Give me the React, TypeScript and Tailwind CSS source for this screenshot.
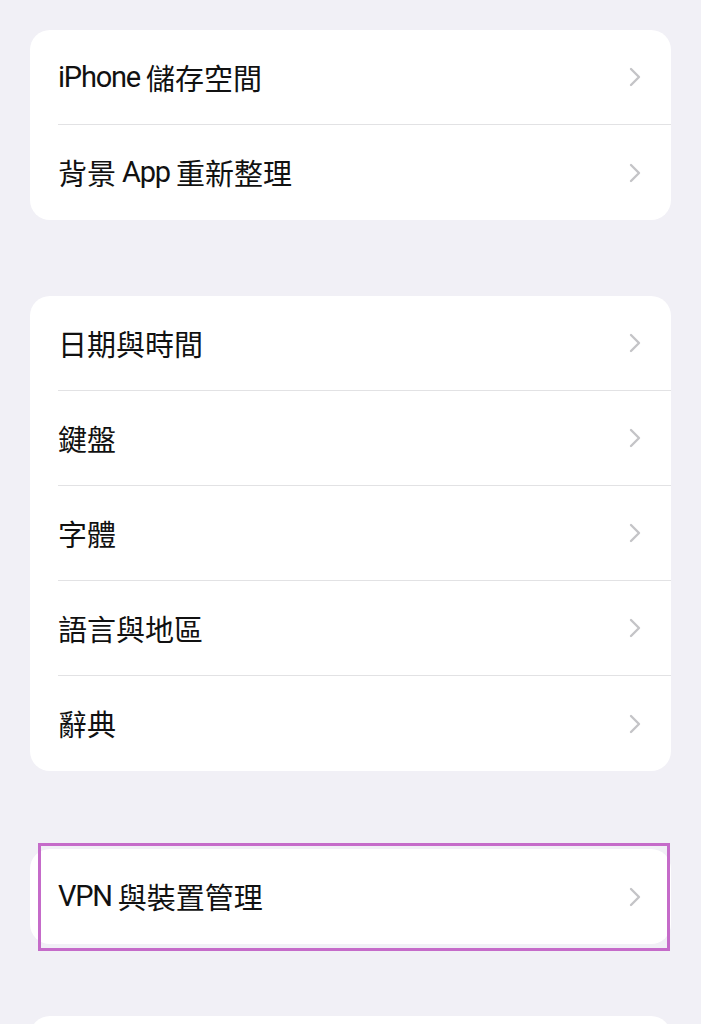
import React from 'react';

const font = { fontFamily: '"Noto Sans CJK TC", "Noto Sans", sans-serif' };

function Chevron() {
  return (
    <svg width="12" height="20" viewBox="0 0 12 20" fill="none" className="shrink-0">
      <path d="M2 2 L10 10 L2 18" stroke="#c4c4c7" strokeWidth="2.4" strokeLinecap="round" strokeLinejoin="round" />
    </svg>
  );
}

// label parts: latin words get a narrower face and a small gap on either side of CJK
function Label({ parts }: { parts: string[] }) {
  return (
    <span className="flex items-center gap-[6px] text-[29px] leading-none text-[#111]">
      {parts.map((p, i) =>
        /^[A-Za-z]+$/.test(p) ? (
          <span key={i} className="tracking-[-1.2px] font-[Roboto,sans-serif]">{p}</span>
        ) : (
          <span key={i}>{p}</span>
        ),
      )}
    </span>
  );
}

function Row({ parts, last }: { parts: string[]; last?: boolean }) {
  return (
    <div className="pl-[28px]">
      <div className={`flex h-[95px] items-center justify-between pr-[30px] ${last ? '' : 'border-b border-[#e2e2e4]'}`}>
        <Label parts={parts} />
        <Chevron />
      </div>
    </div>
  );
}

function Card({ items, highlight }: { items: string[][]; highlight?: boolean }) {
  return (
    <div className="relative rounded-[20px] bg-white">
      {items.map((t, i) => (
        <Row key={i} parts={t} last={i === items.length - 1} />
      ))}
      {highlight && (
        <div className="pointer-events-none absolute left-[8px] right-[1px] top-[-6px] bottom-[-7px] border-[3px] border-[#c56bc9]" />
      )}
    </div>
  );
}

export default function App() {
  return (
    <div className="h-[1024px] overflow-hidden bg-[#f1f0f6] px-[30px] pt-[30px]" style={font}>
      <div className="flex flex-col gap-[76px]">
        <Card items={[['iPhone', '儲存空間'], ['背景', 'App', '重新整理']]} />
        <Card items={[['日期與時間'], ['鍵盤'], ['字體'], ['語言與地區'], ['辭典']]} />
        <div className="pt-[2px]">
          <Card items={[['VPN', '與裝置管理']]} highlight />
        </div>
        <div className="-mt-[4px] h-[95px] rounded-[20px] bg-white" />
      </div>
    </div>
  );
}
